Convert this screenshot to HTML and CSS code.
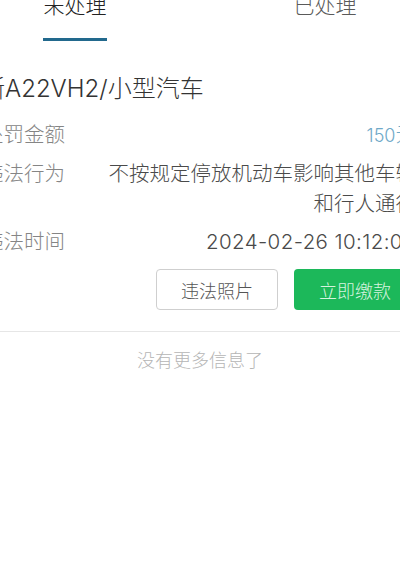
FILE: index.html
```html
<!DOCTYPE html>
<html lang="zh-CN">
<head>
  <meta charset="UTF-8">
  <meta name="viewport" content="width=device-width, initial-scale=1.0">
  <title>违法处理</title>
  <link rel="stylesheet" href="styles.css">
</head>
<body>
  <div class="screen">
    <nav class="tabs">
      <a class="tab active" href="#pending">
        <span class="tab-text">未处理</span>
        <span class="tab-bar"></span>
      </a>
      <a class="tab" href="#done">
        <span class="tab-text">已处理</span>
      </a>
    </nav>

    <div class="record" id="pending">
      <h2 class="plate">浙A22VH2/小型汽车</h2>
      <div class="row">
        <span class="label">处罚金额</span>
        <span class="value amount"><span class="num">150</span>元</span>
      </div>
      <div class="row">
        <span class="label">违法行为</span>
        <span class="value">不按规定停放机动车影响其他车辆和行人通行</span>
      </div>
      <div class="row">
        <span class="label">违法时间</span>
        <span class="value date">2024-02-26 10:12:00</span>
      </div>
      <div class="actions">
        <button class="btn btn-outline">违法照片</button>
        <button class="btn btn-pay">立即缴款</button>
      </div>
    </div>

    <p class="no-more">没有更多信息了</p>
  </div>
</body>
</html>
```

FILE: styles.css
```css
body {
  margin: 0;
  overflow: hidden;
  background: #fff;
  font-family: Inter, "Noto Sans CJK SC", sans-serif;
  font-weight: 300;
}

.screen {
  width: 500px;
  margin-left: -50px;
}

.tabs {
  display: flex;
  margin-top: -8px;
}

.tab {
  flex: 1;
  display: flex;
  flex-direction: column;
  align-items: center;
  text-decoration: none;
  color: #5a5a5a;
}

.tab.active {
  color: #222;
}

.tab-text {
  font-size: 21px;
  line-height: 28px;
}

.tab-bar {
  width: 64px;
  height: 3px;
  margin-top: 18px;
  background: #22698d;
}

.record {
  padding: 31px 34px 0 33px;
  border-bottom: 1px solid #e6e6e6;
}

.plate {
  margin: 0 0 14px -2px;
  font-size: 24px;
  font-weight: 300;
  line-height: 34px;
  color: #333;
}

.row {
  display: flex;
  margin-bottom: 8px;
  font-size: 20.5px;
  line-height: 30px;
}

.label {
  width: 117px;
  flex-shrink: 0;
  color: #858585;
}

.value {
  flex: 1;
  text-align: right;
  color: #4a4a4a;
}

.value.amount {
  color: #6fa9c8;
}

.value.date {
  letter-spacing: 0.4px;
}

.num {
  font-size: 18px;
}

.actions {
  display: flex;
  justify-content: flex-end;
  gap: 16px;
  margin-top: 12px;
  padding-bottom: 21px;
}

.btn {
  width: 122px;
  height: 41px;
  border-radius: 4px;
  font-family: inherit;
  font-size: 18px;
  font-weight: 300;
  cursor: pointer;
}

.btn-outline {
  background: #fff;
  border: 1px solid #cfcfcf;
  color: #555;
}

.btn-pay {
  background: #1cb85a;
  border: none;
  color: #d6f3df;
}

.no-more {
  margin: 17px 0 0;
  text-align: center;
  font-size: 18px;
  line-height: 24px;
  color: #b5b5b5;
}
```
